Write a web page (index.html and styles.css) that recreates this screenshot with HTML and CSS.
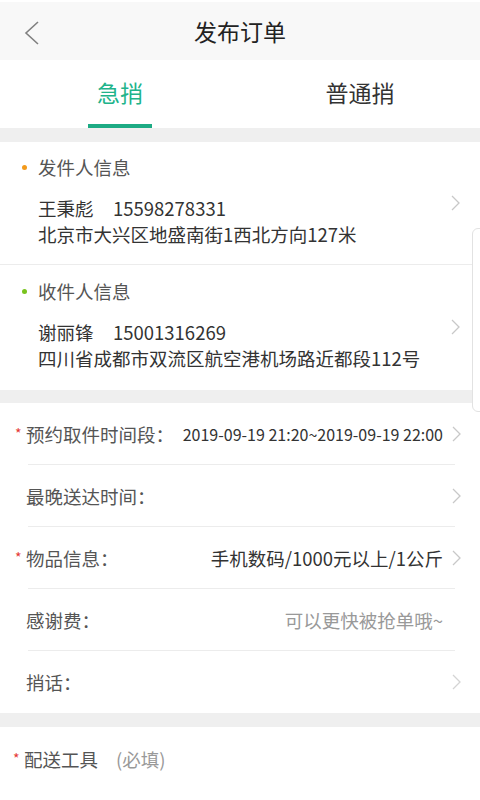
FILE: index.html
```html
<!DOCTYPE html>
<html lang="zh-CN">
<head>
    <meta charset="UTF-8">
    <meta name="viewport" content="width=device-width, initial-scale=1.0">
    <title>发布订单</title>
    <link rel="stylesheet" href="styles.css">
</head>
<body>
    <header class="top-bar">
        <span class="back">
            <svg width="16" height="24" viewBox="0 0 16 24"><path d="M14 1 L2 12 L14 23" fill="none" stroke="#808080" stroke-width="1.6"/></svg>
        </span>
        <h1>发布订单</h1>
    </header>

    <nav class="tabs">
        <div class="tab active">急捎</div>
        <div class="tab">普通捎</div>
    </nav>

    <div class="gap"></div>

    <section class="contact">
        <div class="contact-title"><span class="dot orange"></span>发件人信息</div>
        <div class="contact-line">
            <span class="name">王秉彪</span><span>15598278331</span>
            <span class="arrow">
                <svg width="9" height="16" viewBox="0 0 9 16"><path d="M1 1 L8 8 L1 15" fill="none" stroke="#c8c8c8" stroke-width="1.3"/></svg>
            </span>
        </div>
        <div class="contact-addr">北京市大兴区地盛南街1西北方向127米</div>
    </section>

    <section class="contact last">
        <div class="contact-title"><span class="dot green"></span>收件人信息</div>
        <div class="contact-line">
            <span class="name">谢丽锋</span><span>15001316269</span>
            <span class="arrow">
                <svg width="9" height="16" viewBox="0 0 9 16"><path d="M1 1 L8 8 L1 15" fill="none" stroke="#c8c8c8" stroke-width="1.3"/></svg>
            </span>
        </div>
        <div class="contact-addr">四川省成都市双流区航空港机场路近都段112号</div>
    </section>

    <div class="gap"></div>

    <div class="rows">
        <div class="row">
            <span class="label"><i class="req">*</i>预约取件时间段：</span>
            <span class="value small">2019-09-19 21:20~2019-09-19 22:00</span>
            <span class="arrow"><svg width="9" height="16" viewBox="0 0 9 16"><path d="M1 1 L8 8 L1 15" fill="none" stroke="#c8c8c8" stroke-width="1.3"/></svg></span>
        </div>
        <div class="row">
            <span class="label">最晚送达时间：</span>
            <span class="value"></span>
            <span class="arrow"><svg width="9" height="16" viewBox="0 0 9 16"><path d="M1 1 L8 8 L1 15" fill="none" stroke="#c8c8c8" stroke-width="1.3"/></svg></span>
        </div>
        <div class="row">
            <span class="label"><i class="req">*</i>物品信息：</span>
            <span class="value">手机数码/1000元以上/1公斤</span>
            <span class="arrow"><svg width="9" height="16" viewBox="0 0 9 16"><path d="M1 1 L8 8 L1 15" fill="none" stroke="#c8c8c8" stroke-width="1.3"/></svg></span>
        </div>
        <div class="row">
            <span class="label">感谢费：</span>
            <span class="value hint">可以更快被抢单哦~</span>
            <span class="arrow"></span>
        </div>
        <div class="row">
            <span class="label">捎话：</span>
            <span class="value"></span>
            <span class="arrow"><svg width="9" height="16" viewBox="0 0 9 16"><path d="M1 1 L8 8 L1 15" fill="none" stroke="#d4d4d4" stroke-width="1.3"/></svg></span>
        </div>
    </div>

    <div class="gap"></div>

    <div class="tool">
        <span class="label"><i class="req">*</i>配送工具</span>
        <span class="optional">(必填)</span>
    </div>

    <div class="edge-handle"></div>
</body>
</html>
```

FILE: styles.css
```css
body { margin: 0; background: #fff; font-family: "Noto Sans CJK SC", "Noto Sans", sans-serif; color: #333; width: 480px; height: 800px; overflow: hidden; position: relative; }

.top-bar { height: 58px; border-top: 2px solid #fff; background: #f8f8f8; display: flex; align-items: center; justify-content: center; position: relative; }
.top-bar h1 { margin: 0; font-size: 23px; font-weight: normal; color: #222; }
.back { position: absolute; left: 24px; top: 19px; }

.tabs { display: flex; height: 68px; background: #fff; }
.tab { flex: 1; display: flex; align-items: center; justify-content: center; font-size: 23px; color: #333; position: relative; padding-bottom: 4px; }
.tab.active { color: #20b38a; }
.tab.active::after { content: ""; position: absolute; bottom: 0; left: 50%; width: 64px; margin-left: -32px; height: 4px; background: #1dab84; }

.gap { height: 14px; background: #efefef; }
.gap:nth-of-type(2) { height: 13px; }

.contact { padding: 12px 0 17px 38px; border-bottom: 1px solid #ececec; position: relative; }
.contact.last { border-bottom: none; padding-top: 13px; padding-bottom: 19px; }
.contact-title { height: 26px; line-height: 26px; font-size: 18.5px; color: #555; position: relative; }
.dot { position: absolute; left: -16px; top: 11px; width: 5px; height: 5px; border-radius: 50%; }
.dot.orange { background: #f39a1b; }
.dot.green { background: #79c31e; }
.contact-line { margin-top: 15px; height: 26px; line-height: 26px; font-size: 18.5px; display: flex; align-items: center; }
.contact-line .name { width: 75px; }
.contact-addr { height: 26px; line-height: 26px; font-size: 18.5px; }
.contact-line .arrow { margin-left: auto; margin-right: 20px; margin-top: -10px; display: flex; }

.rows { padding: 0 25px 0 0; }
.row { box-sizing: border-box; height: 62px; margin-left: 28px; border-bottom: 1px solid #ececec; display: flex; align-items: center; }
.row:last-child { border-bottom: none; }
.label { font-size: 18.5px; color: #555; position: relative; margin-left: -2px; }
.req { position: absolute; left: -11px; top: 6px; line-height: 13px; font-style: normal; color: #e53935; font-size: 14px; }
.value { margin-left: auto; font-size: 18.5px; color: #333; }
.value.small { font-size: 16px; }
.value.hint { color: #999; }
.row .arrow { width: 9px; margin-left: 9px; margin-right: -6px; display: flex; }

.tool { padding: 0 0 0 26px; height: 64px; display: flex; align-items: center; }
.optional { font-size: 18.5px; color: #999; margin-left: 18px; }

.edge-handle { position: absolute; left: 472px; top: 228px; width: 20px; height: 182px; border: 1px solid #e2e2e2; border-radius: 6px; background: #fff; }
```
